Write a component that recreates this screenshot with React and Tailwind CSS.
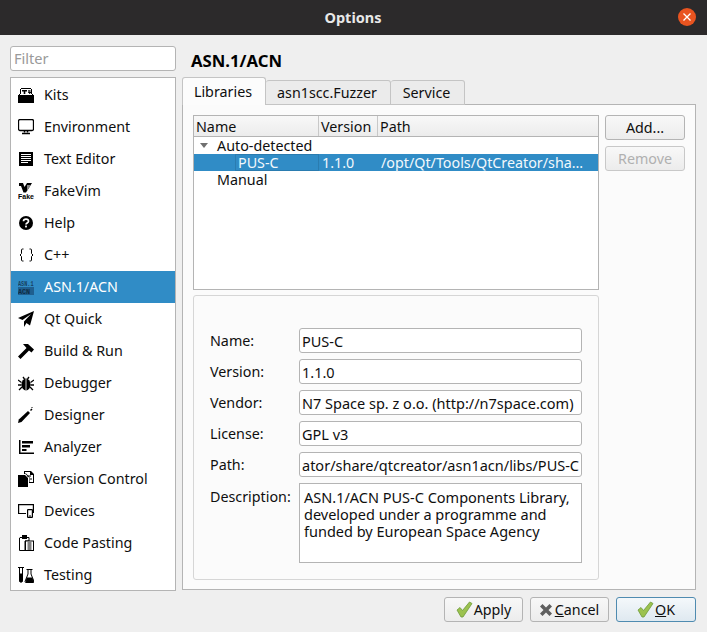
import React from 'react';

const font = { fontFamily: '"Noto Sans", sans-serif' };

const KitsIcon = () => (
  <svg width="16" height="16" viewBox="0 0 16 16" fill="#000">
    <path d="M3 1h10v1H3zM2 2h1v5H2zM13 2h1v5h-1zM0 8h16v8H0zM1 7h1v1H1zM14 7h1v1h-1z" />
    <path d="M4 3h5v1.500H7.300V7H5.700V4.500H4zM10 3h.7v2h.6V3h.7v2h.6V3h.6v3h-1v1h-1V6h-1z" />
  </svg>
);
const EnvIcon = () => (
  <svg width="16" height="16" viewBox="0 0 16 16" fill="none" stroke="#000">
    <rect x="0.500" y="0.500" width="15" height="11" rx="1.500" strokeWidth="1.300" />
    <path d="M6.500 12v1.500M9.500 12v1.500" strokeWidth="1.500" />
    <path d="M4 14.500h8" strokeWidth="1.500" />
  </svg>
);
const TextIcon = () => (
  <svg width="14" height="14" viewBox="0 0 14 14">
    <rect width="14" height="14" fill="#000" />
    <path d="M2 2.500h10M2 4.500h10M2 6.500h10M2 8.500h10M2 10.500h7" stroke="#fff" />
  </svg>
);
const FakeIcon = () => (
  <svg width="17" height="16" viewBox="0 0 17 16">
    <path d="M1 0h4l1.500 4L9 0h5l-6 9.500H5.500L3 3H1z" fill="#000" />
    <path d="M9 2l4 0-4 6z" fill="#888" />
    <text x="0" y="15.500" fontSize="7" fontWeight="700" fill="#000" fontFamily="Liberation Sans, sans-serif">Fake</text>
  </svg>
);
const HelpIcon = () => (
  <svg width="14" height="14" viewBox="0 0 14 14">
    <circle cx="7" cy="7" r="7" fill="#000" />
    <path d="M4.500 5.300c0-3 5-3 5 0 0 1.700-2.500 1.700-2.500 3.200" fill="none" stroke="#fff" strokeWidth="1.700" />
    <rect x="6.100" y="9.600" width="1.800" height="1.800" fill="#fff" />
  </svg>
);
const CppIcon = () => (
  <svg width="15" height="14" viewBox="0 0 15 14" fill="none" stroke="#000">
    <path d="M4.500 1H3.500Q2.500 1 2.500 2V5.500L1 7l1.500 1.500V12q0 1 1 1h1M10.500 1h1q1 0 1 1v3.500L14 7l-1.500 1.500V12q0 1-1 1h-1" />
  </svg>
);
const AsnIcon = () => (
  <svg width="16" height="16" viewBox="0 0 16 16">
    <rect x="0" y="8" width="16" height="8" fill="#1f5f8f" />
    <text x="0" y="6.800" fontSize="8" fontWeight="700" fill="#17405f" fontFamily="Liberation Mono, monospace" textLength="15.500" lengthAdjust="spacingAndGlyphs">ASN.1</text>
    <text x="0" y="14.800" fontSize="8" fontWeight="700" fill="#0e2c44" fontFamily="Liberation Mono, monospace" textLength="12" lengthAdjust="spacingAndGlyphs">ACN</text>
  </svg>
);
const QuickIcon = () => (
  <svg width="16" height="16" viewBox="0 0 16 16" fill="#000">
    <path d="M16 0L0 7l4.500 2L13 3 6 10.500V16l2.500-4 3.500 2.500z" />
  </svg>
);
const BuildIcon = () => (
  <svg width="16" height="16" viewBox="0 0 16 16" fill="#000">
    <path d="M5 1h5l6 5.500-2.500 3L11 7.500 2.500 16 0 13.500 8.500 5z" />
  </svg>
);
const DebugIcon = () => (
  <svg width="16" height="16" viewBox="0 0 16 16">
    <ellipse cx="8" cy="9.500" rx="4.500" ry="6" fill="#000" />
    <path d="M5 2l1.500 2M11 2L9.500 4M0 5l3.500 2.500M16 5l-3.500 2.500M0 10h3.500M16 10h-3.500M1 15l3-3M15 15l-3-3" stroke="#000" strokeWidth="1.300" />
    <path d="M8 4v11.500" stroke="#fff" strokeWidth="0.800" />
  </svg>
);
const DesignerIcon = () => (
  <svg width="16" height="16" viewBox="0 0 16 16" fill="#000">
    <path d="M0 16l.8-3.500L10 4l2 2-8.500 9z" />
    <path d="M12 3l1.500-1.500 1 1L13 4zM13.500 0h1v1h-1z" />
  </svg>
);
const AnalyzerIcon = () => (
  <svg width="15" height="14" viewBox="0 0 15 14" fill="#000">
    <path d="M0 0h1.500v12.500H15V14H0z" />
    <path d="M3 1h11v2.500H3zM3 5h8v2.500H3zM3 9h4.500v2H3z" />
  </svg>
);
const VcsIcon = () => (
  <svg width="16" height="16" viewBox="0 0 16 16">
    <path d="M0 4h7l3 3v9H0z" fill="#000" />
    <path d="M6 0h7l3 3v9h-5V6.500L7.500 3H6z" fill="#000" />
    <path d="M7 1h5v3h3v7h-3.500V6L8 2.500H7z" fill="#fff" />
    <path d="M9 5h4M12 8h2" stroke="#000" />
  </svg>
);
const DevicesIcon = () => (
  <svg width="16" height="14" viewBox="0 0 16 14" fill="none" stroke="#000" strokeWidth="1.200">
    <path d="M8 9.500H.6V.6h14.800V9" />
    <rect x="9.600" y="5.600" width="4.800" height="7.800" rx="0.500" fill="#fff" />
    <path d="M11 12h2" />
  </svg>
);
const PasteIcon = () => (
  <svg width="15" height="16" viewBox="0 0 15 16">
    <path d="M1 2.500h9V6H6v9.500H.5V3z" fill="#fff" stroke="#000" />
    <rect x="3" y="0" width="5" height="4" fill="#000" />
    <rect x="6.500" y="6" width="8" height="9.500" fill="#fff" stroke="#000" />
    <path d="M8.500 8h4M8.500 10h4M8.500 12h4M8.500 14h4" stroke="#000" />
  </svg>
);
const TestIcon = () => (
  <svg width="16" height="16" viewBox="0 0 16 16" fill="none" stroke="#000">
    <path d="M0 .5h6M1.500 1v12.500a1.500 1.500 0 0 0 3 0V1" />
    <path d="M1.500 7h3v6.500a1.500 1.500 0 0 1-3 0z" fill="#000" />
    <path d="M8.500 2.500h6M10 3v4l-3 7.500q0 1 1 1h7.500q.5 0 .5-1L13 7V3" />
    <path d="M9 11h5l1.500 4H8z" fill="#000" />
  </svg>
);

const navItems = [
  { label: 'Kits', icon: <KitsIcon /> },
  { label: 'Environment', icon: <EnvIcon /> },
  { label: 'Text Editor', icon: <TextIcon /> },
  { label: 'FakeVim', icon: <FakeIcon /> },
  { label: 'Help', icon: <HelpIcon /> },
  { label: 'C++', icon: <CppIcon /> },
  { label: 'ASN.1/ACN', icon: <AsnIcon />, active: true },
  { label: 'Qt Quick', icon: <QuickIcon /> },
  { label: 'Build & Run', icon: <BuildIcon /> },
  { label: 'Debugger', icon: <DebugIcon /> },
  { label: 'Designer', icon: <DesignerIcon /> },
  { label: 'Analyzer', icon: <AnalyzerIcon /> },
  { label: 'Version Control', icon: <VcsIcon /> },
  { label: 'Devices', icon: <DevicesIcon /> },
  { label: 'Code Pasting', icon: <PasteIcon /> },
  { label: 'Testing', icon: <TestIcon /> },
];

const fields = [
  ['Name:', 'PUS-C'],
  ['Version:', '1.1.0'],
  ['Vendor:', 'N7 Space sp. z o.o. (http://n7space.com)'],
  ['License:', 'GPL v3'],
  ['Path:', 'ator/share/qtcreator/asn1acn/libs/PUS-C'],
];

const Check = () => (
  <svg width="17" height="17" viewBox="0 0 17 17">
    <path d="M1 9l3-2.500 2.500 3L13.500 1 16 2.500 7 16h-2z" fill="#9cc24f" stroke="#6d9a3a" strokeWidth="0.800" />
  </svg>
);
const Cross = () => (
  <svg width="12" height="12" viewBox="0 0 12 12">
    <path d="M2.500 0L6 3.500 9.500 0 12 2.500 8.500 6 12 9.500 9.500 12 6 8.500 2.500 12 0 9.500 3.500 6 0 2.500z" fill="#5f5f5f" />
  </svg>
);

const btn = 'flex items-center justify-center rounded-[3px] border bg-gradient-to-b from-[#f8f8f8] to-[#ececec]';

const App = () => (
  <div className="w-[707px] h-[632px] flex flex-col bg-[#efefef] text-[14.3px] leading-[16px] text-[#0f0f0f] overflow-hidden" style={font}>
    {/* Title bar */}
    <div className="h-[35px] shrink-0 bg-[#2c2a2b] flex items-center relative pb-[2px]">
      <span className="w-full text-center text-[#e8e8e8] font-bold text-[14.5px] pr-[1px]">Options</span>
      <span className="absolute left-[678px] top-[8px] w-[18px] h-[18px] rounded-full bg-[#e95420] flex items-center justify-center">
        <svg width="10" height="10" viewBox="0 0 10 10"><path d="M1.500 1.500l7 7M8.500 1.500l-7 7" stroke="#fff" strokeWidth="1.300" /></svg>
      </span>
    </div>

    <div className="flex-1 flex flex-col pl-[10px] pr-[11px]">
      <div className="flex gap-[6px] pt-[11px]">
        {/* Sidebar */}
        <div className="w-[166px] shrink-0 flex flex-col gap-[6px]">
          <div className="h-[25px] rounded-[3px] border border-[#b4b4b4] bg-white flex items-center pl-[3px] pb-[2px] text-[#9a9a9a] text-[14.6px]">Filter</div>
          <div className="h-[514px] border border-[#b4b4b4] bg-white pt-[1px]">
            {navItems.map((item) => (
              <div key={item.label} className={`h-[32px] flex items-center ${item.active ? 'bg-[#308cc6] text-white' : ''}`}>
                <span className="w-[33px] shrink-0"><span className="w-[30px] flex justify-center">{item.icon}</span></span>
                <span>{item.label}</span>
              </div>
            ))}
          </div>
        </div>

        {/* Right side */}
        <div className="flex-1 flex flex-col">
          <div className="h-[32px] pl-[9px] flex items-center font-bold text-[16.7px] text-black -mt-[1px]">ASN.1/ACN</div>

          {/* Tabs */}
          <div className="h-[28px] flex items-end -mb-[1px] relative">
            <div className="w-[84px] h-[28px] rounded-t-[3px] border border-b-0 border-[#c4c4c4] bg-[#fcfcfc] flex items-center justify-center z-10 pr-[2px]">Libraries</div>
            <div className="w-[125px] h-[25px] rounded-t-[3px] border border-l-0 border-[#c4c4c4] bg-[#ebebeb] flex items-center justify-center pr-[2px]">asn1scc.Fuzzer</div>
            <div className="w-[74px] h-[25px] rounded-t-[3px] border border-l-0 border-[#c4c4c4] bg-[#ebebeb] flex items-center justify-center pr-[2px]">Service</div>
          </div>

          {/* Tab pane */}
          <div className="h-[486px] border border-[#b4b4b4] bg-[#fbfbfb] pl-[10px] pt-[10px] flex flex-col gap-[5px]">
            <div className="flex gap-[6px]">
              {/* Library tree */}
              <div className="w-[406px] h-[175px] border border-[#b4b4b4] bg-white flex flex-col">
                <div className="h-[21px] shrink-0 flex border-b border-[#b4b4b4] bg-gradient-to-b from-[#f8f8f8] to-[#ececec]">
                  <span className="w-[125px] pl-[2px] pt-[2px] border-r border-[#c8c8c8] flex items-center">Name</span>
                  <span className="w-[59px] pl-[2px] pt-[2px] border-r border-[#c8c8c8] flex items-center">Version</span>
                  <span className="flex-1 pl-[2px] pt-[2px] flex items-center">Path</span>
                </div>
                <div className="h-[17px] flex items-center pl-[23px] relative">
                  <span className="absolute left-[6px] top-[6px] w-0 h-0 border-x-[4px] border-x-transparent border-t-[5px] border-t-[#707070]" />
                  Auto-detected
                </div>
                <div className="h-[17px] flex items-center bg-[#308cc6] text-[#f2f8fc] whitespace-nowrap">
                  <span className="ml-[41px] w-[84px] h-full pl-[2px] flex items-center border border-[#2a7cb0]">PUS-C</span>
                  <span className="w-[59px] pl-[3px]">1.1.0</span>
                  <span className="pl-[3px]">/opt/Qt/Tools/QtCreator/sha…</span>
                </div>
                <div className="h-[17px] flex items-center pl-[23px]">Manual</div>
              </div>
              {/* Add / Remove */}
              <div className="w-[80px] flex flex-col gap-[6px]">
                <div className={`${btn} h-[25px] border-[#b4b4b4]`}>Add...</div>
                <div className={`${btn} h-[25px] border-[#c8c8c8] text-[#b0b0b0]`}>Remove</div>
              </div>
            </div>

            {/* Details */}
            <div className="w-[406px] h-[285px] rounded-[3px] border border-[#d6d6d6] pt-[32px] pl-[16px] flex flex-col gap-[6px]">
              {fields.map(([label, value]) => (
                <div key={label} className="flex items-center h-[25px]">
                  <span className="w-[89px]">{label}</span>
                  <span className="w-[283px] h-full rounded-[3px] border border-[#b4b4b4] bg-white flex items-center pl-[2px] whitespace-nowrap overflow-hidden text-[14.5px]">{value}</span>
                </div>
              ))}
              <div className="flex">
                <span className="w-[89px] pt-[6px]">Description:</span>
                <div className="w-[283px] h-[80px] border border-[#b4b4b4] bg-white pl-[4px] pt-[5px] leading-[17px] text-[14.5px]">
                  ASN.1/ACN PUS-C Components Library,<br />developed under a programme and<br />funded by European Space Agency
                </div>
              </div>
            </div>
          </div>
        </div>
      </div>

      {/* Dialog buttons */}
      <div className="flex justify-end gap-[7px] pt-[6px]">
        <div className={`${btn} w-[79px] h-[25px] gap-[1px] border-[#b4b4b4]`}><Check /><span>Apply</span></div>
        <div className={`${btn} w-[79px] h-[25px] gap-[3px] border-[#b4b4b4]`}><Cross /><span><span className="underline">C</span>ancel</span></div>
        <div className="flex items-center justify-center rounded-[3px] border border-[#4f8bb0] bg-gradient-to-b from-[#f4f8fb] to-[#dfe9f0] w-[80px] h-[25px] gap-[1px]"><Check /><span><span className="underline">O</span>K</span></div>
      </div>
    </div>
  </div>
);

export default App;
